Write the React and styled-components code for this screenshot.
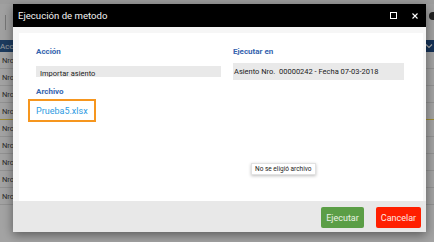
import styled, { createGlobalStyle } from "styled-components";

const GlobalStyle = createGlobalStyle`
  html, body {
    margin: 0;
    padding: 0;
    width: 434px;
    height: 242px;
    overflow: hidden;
    font-family: Roboto, "Liberation Sans", sans-serif;
  }
`;

const rows = Array.from({ length: 9 });

const App = () => {
  return (
    <>
      <GlobalStyle />
      <Page>
        <TopStrip />
        <Toolbar>
          <Separator />
          <Filler />
          <ToolDot />
        </Toolbar>
        <TableHeader>
          <HeaderCell>Acción</HeaderCell>
          <Filler />
          <Chevron>
            <svg width="8" height="6" viewBox="0 0 8 6">
              <path d="M1 1.5 L4 4.5 L7 1.5" fill="none" stroke="#fff" strokeWidth="1.2" />
            </svg>
          </Chevron>
        </TableHeader>
        {rows.map((_, i) => (
          <Row key={i} selected={i === 3}>
            <RowCell>Nro</RowCell>
          </Row>
        ))}
      </Page>

      <Backdrop>
        <Dialog>
          <TitleBar>
            <Title>Ejecución de metodo</Title>
            <Filler />
            <TitleIcon>
              <svg width="7" height="7" viewBox="0 0 7 7">
                <rect x="0.5" y="0.5" width="6" height="6" fill="none" stroke="#fff" strokeWidth="1" />
              </svg>
            </TitleIcon>
            <TitleIcon wide>
              <svg width="6" height="6" viewBox="0 0 6 6">
                <path d="M0.5 0.5 L5.5 5.5 M5.5 0.5 L0.5 5.5" stroke="#fff" strokeWidth="1.1" />
              </svg>
            </TitleIcon>
          </TitleBar>

          <Body>
            <Panel>
              <Columns>
                <Column>
                  <Label>Acción</Label>
                  <Field clipped>Importar asiento</Field>
                  <Label spaced>Archivo</Label>
                  <FileBox>Prueba5.xlsx</FileBox>
                </Column>
                <Column>
                  <Label>Ejecutar en</Label>
                  <Field>Asiento Nro.&nbsp; 00000242 - Fecha 07-03-2018</Field>
                </Column>
              </Columns>
              <Tooltip>No se eligió archivo</Tooltip>
            </Panel>
          </Body>

          <Footer>
            <Button variant="ok">Ejecutar</Button>
            <Button variant="cancel">Cancelar</Button>
          </Footer>
        </Dialog>
      </Backdrop>
    </>
  );
};

const Page = styled.div`
  width: 434px;
  height: 242px;
  background: #ffffff;
  display: flex;
  flex-direction: column;
`;

const Filler = styled.div`
  flex-grow: 1;
`;

const TopStrip = styled.div`
  height: 4px;
  background: #f4f4f4;
`;

const Toolbar = styled.div`
  height: 36px;
  display: flex;
  align-items: center;
  padding-left: 5px;
  background: #fbfbfb;
`;

const Separator = styled.div`
  width: 1px;
  height: 15px;
  background: #b8b8b8;
`;

const ToolDot = styled.div`
  width: 8px;
  height: 8px;
  border-radius: 50%;
  background: #333;
  margin-right: -3px;
  margin-top: -12px;
`;

const TableHeader = styled.div`
  height: 12px;
  display: flex;
  align-items: center;
  background: #2c5c94;
`;

const HeaderCell = styled.div`
  font-size: 8px;
  color: #e8eef6;
  padding-left: 0;
`;

const Chevron = styled.div`
  width: 10px;
  height: 12px;
  display: flex;
  align-items: center;
  justify-content: center;
  background: #1f4c85;
`;

const Row = styled.div`
  height: 17px;
  box-sizing: border-box;
  display: flex;
  align-items: center;
  border-bottom: 1px solid ${(p) => (p.selected ? "#f2d64b" : "#e3e3e3")};
  background: #fdfdfd;
`;

const RowCell = styled.div`
  font-size: 7.5px;
  color: #444;
  padding-left: 2px;
`;

const Backdrop = styled.div`
  position: fixed;
  inset: 0;
  background: rgba(0, 0, 0, 0.36);
`;

const Dialog = styled.div`
  position: absolute;
  left: 13px;
  top: 4px;
  width: 413px;
  height: 228px;
  display: flex;
  flex-direction: column;
  background: #f5f5f5;
  box-shadow: 0 3px 10px rgba(0, 0, 0, 0.45);
`;

const TitleBar = styled.div`
  height: 23px;
  flex-shrink: 0;
  display: flex;
  align-items: center;
  padding: 0 8px 0 5px;
  background: #000;
`;

const Title = styled.div`
  font-size: 9.6px;
  color: #f2f2f2;
`;

const TitleIcon = styled.div`
  display: flex;
  align-items: center;
  margin-left: ${(p) => (p.wide ? "15px" : "0")};
`;

const Body = styled.div`
  flex-grow: 1;
  display: flex;
  padding: 6px 3px 0 6px;
  background: #f6f6f6;
`;

const Panel = styled.div`
  position: relative;
  flex-grow: 1;
  background: #fff;
  padding: 14px 16px 0 17px;
`;

const Columns = styled.div`
  display: grid;
  grid-template-columns: 185px 171px;
  column-gap: 12px;
  align-items: start;
`;

const Column = styled.div`
  display: flex;
  flex-direction: column;
  align-items: flex-start;
`;

const Label = styled.div`
  height: 10px;
  line-height: 10px;
  font-size: 8px;
  font-weight: 700;
  color: #3563ae;
  margin-top: ${(p) => (p.spaced ? "10px" : "0")};
`;

const Field = styled.div`
  align-self: stretch;
  box-sizing: border-box;
  background: #e9e9e9;
  font-size: 7.5px;
  color: #222;
  white-space: nowrap;
  overflow: hidden;
  margin-top: ${(p) => (p.clipped ? "9px" : "6px")};
  height: ${(p) => (p.clipped ? "11px" : "17px")};
  line-height: ${(p) => (p.clipped ? "10px" : "17px")};
  padding: ${(p) => (p.clipped ? "3px 0 0 4px" : "0 0 0 1px")};
`;

const FileBox = styled.div`
  box-sizing: border-box;
  width: 68px;
  height: 23px;
  margin: 2px 0 0 -8px;
  padding-left: 6px;
  border: 2px solid #f6961e;
  display: flex;
  align-items: center;
  font-size: 9px;
  color: #2d9be2;
`;

const Tooltip = styled.div`
  position: absolute;
  left: 232px;
  top: 130px;
  height: 10px;
  line-height: 10px;
  padding: 0 3px;
  font-size: 6.5px;
  color: #222;
  background: #fff;
  border: 1px solid #e2e2e2;
  box-shadow: 0 1px 3px rgba(0, 0, 0, 0.25);
  white-space: nowrap;
`;

const Footer = styled.div`
  height: 31px;
  flex-shrink: 0;
  box-sizing: border-box;
  display: flex;
  justify-content: flex-end;
  align-items: flex-start;
  gap: 12px;
  padding: 6px 5px 0 0;
  background: #e8e8e8;
`;

const Button = styled.div`
  height: 21px;
  width: ${(p) => (p.variant === "ok" ? "43px" : "45px")};
  display: flex;
  align-items: center;
  justify-content: center;
  border-radius: 2px;
  font-size: 9px;
  color: ${(p) => (p.variant === "ok" ? "#e9f2e4" : "#ffe9e4")};
  background: ${(p) => (p.variant === "ok" ? "#5b9e46" : "#ff1f00")};
`;

export default App;
